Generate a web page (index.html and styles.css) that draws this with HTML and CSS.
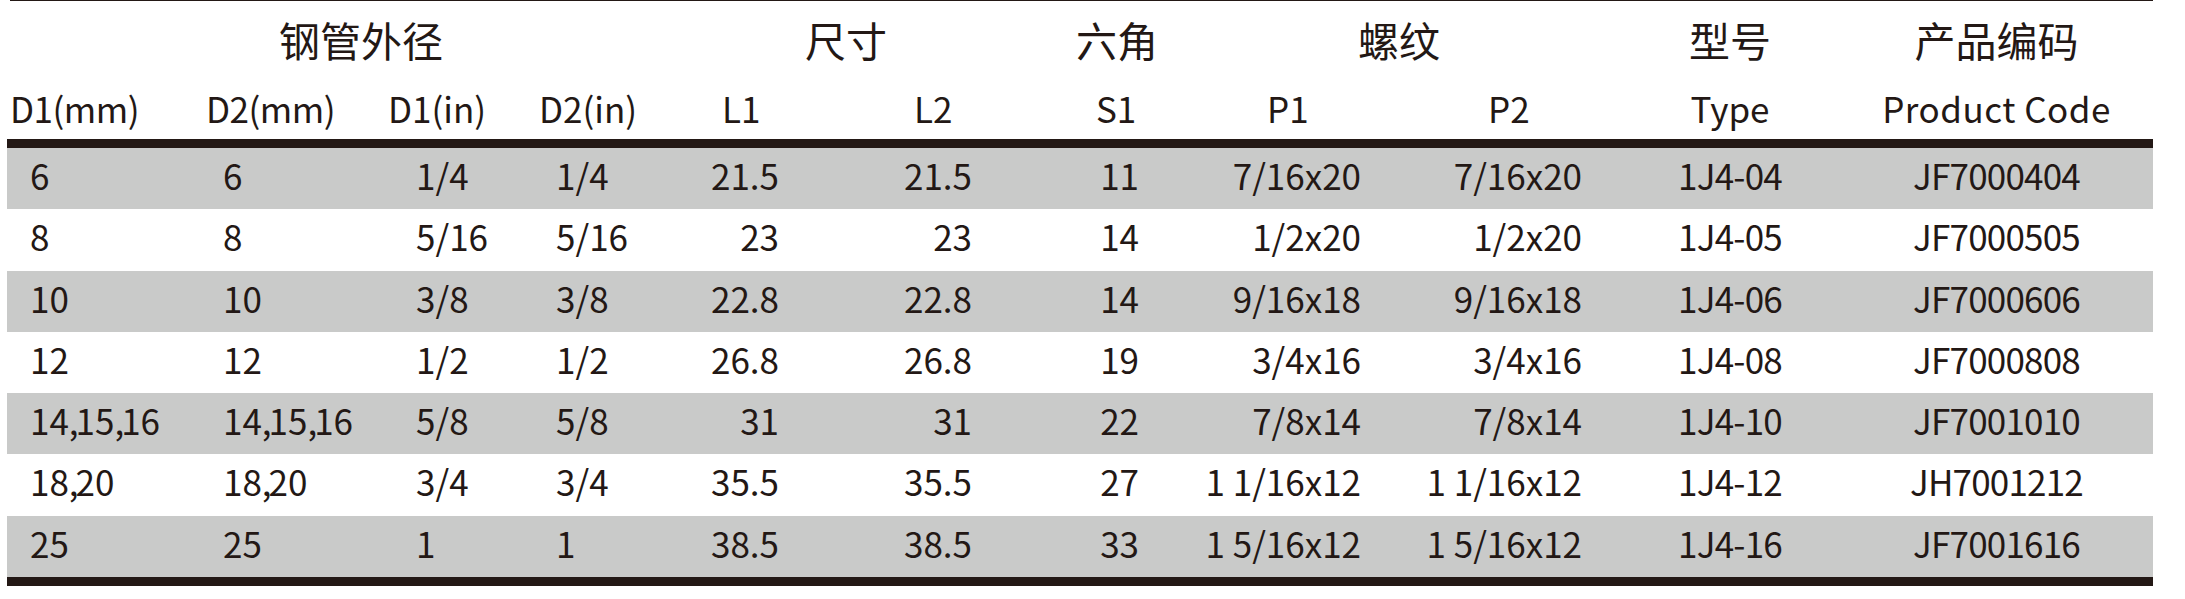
FILE: index.html
```html
<!DOCTYPE html>
<html lang="zh">
<head>
<meta charset="utf-8">
<title>规格表</title>
<link rel="stylesheet" href="styles.css">
</head>
<body>
<div class="sheet">
  <div class="rule-top"></div>
  <div class="head1">
    <div class="g-pipe">钢管外径</div>
    <div class="g-size">尺寸</div>
    <div class="g-hex">六角</div>
    <div class="g-thread">螺纹</div>
    <div class="g-type">型号</div>
    <div class="g-code">产品编码</div>
  </div>
  <div class="grid head2">
    <div class="h c1">D1(mm)</div>
    <div class="h c2">D2(mm)</div>
    <div class="h c3">D1(in)</div>
    <div class="h c4">D2(in)</div>
    <div class="h c5">L1</div>
    <div class="h c6">L2</div>
    <div class="h c7">S1</div>
    <div class="h c8">P1</div>
    <div class="h c9">P2</div>
    <div class="h c10">Type</div>
    <div class="h c11">Product Code</div>
  </div>
  <div class="body">
    <div class="grid row shade"><div class="d c1">6</div><div class="d c2">6</div><div class="d c3">1/4</div><div class="d c4">1/4</div><div class="d c5">21.5</div><div class="d c6">21.5</div><div class="d c7">11</div><div class="d c8">7/16x20</div><div class="d c9">7/16x20</div><div class="d c10">1J4-04</div><div class="d c11">JF7000404</div></div>
    <div class="grid row"><div class="d c1">8</div><div class="d c2">8</div><div class="d c3">5/16</div><div class="d c4">5/16</div><div class="d c5">23</div><div class="d c6">23</div><div class="d c7">14</div><div class="d c8">1/2x20</div><div class="d c9">1/2x20</div><div class="d c10">1J4-05</div><div class="d c11">JF7000505</div></div>
    <div class="grid row shade"><div class="d c1">10</div><div class="d c2">10</div><div class="d c3">3/8</div><div class="d c4">3/8</div><div class="d c5">22.8</div><div class="d c6">22.8</div><div class="d c7">14</div><div class="d c8">9/16x18</div><div class="d c9">9/16x18</div><div class="d c10">1J4-06</div><div class="d c11">JF7000606</div></div>
    <div class="grid row"><div class="d c1">12</div><div class="d c2">12</div><div class="d c3">1/2</div><div class="d c4">1/2</div><div class="d c5">26.8</div><div class="d c6">26.8</div><div class="d c7">19</div><div class="d c8">3/4x16</div><div class="d c9">3/4x16</div><div class="d c10">1J4-08</div><div class="d c11">JF7000808</div></div>
    <div class="grid row shade"><div class="d c1">14<span class="cm">,</span>15<span class="cm">,</span>16</div><div class="d c2">14<span class="cm">,</span>15<span class="cm">,</span>16</div><div class="d c3">5/8</div><div class="d c4">5/8</div><div class="d c5">31</div><div class="d c6">31</div><div class="d c7">22</div><div class="d c8">7/8x14</div><div class="d c9">7/8x14</div><div class="d c10">1J4-10</div><div class="d c11">JF7001010</div></div>
    <div class="grid row"><div class="d c1">18<span class="cm">,</span>20</div><div class="d c2">18<span class="cm">,</span>20</div><div class="d c3">3/4</div><div class="d c4">3/4</div><div class="d c5">35.5</div><div class="d c6">35.5</div><div class="d c7">27</div><div class="d c8">1 1/16x12</div><div class="d c9">1 1/16x12</div><div class="d c10">1J4-12</div><div class="d c11">JH7001212</div></div>
    <div class="grid row shade"><div class="d c1">25</div><div class="d c2">25</div><div class="d c3">1</div><div class="d c4">1</div><div class="d c5">38.5</div><div class="d c6">38.5</div><div class="d c7">33</div><div class="d c8">1 5/16x12</div><div class="d c9">1 5/16x12</div><div class="d c10">1J4-16</div><div class="d c11">JF7001616</div></div>
  </div>
</div>
</body>
</html>
```

FILE: styles.css
```css
html, body {
  margin: 0;
  padding: 0;
  background: #ffffff;
}

body {
  font-family: "Noto Sans CJK SC", "Noto Sans", sans-serif;
  color: #231815;
  font-weight: 400;
}

.sheet {
  margin-left: 7px;
  width: 2146px;
}

.rule-top {
  height: 1px;
  margin-left: 3px;
  background: #231815;
}

.grid {
  display: grid;
  grid-template-columns: 193px 180px 150px 130px 140px 200px 180px 220px 220px 220px 313px;
}

/* group header */
.head1 {
  display: grid;
  grid-template-columns: 193px 180px 150px 130px 140px 200px 180px 220px 220px 220px 313px;
  height: 76px;
  line-height: 76px;
  font-size: 41px;
  white-space: nowrap;
}

.g-pipe { grid-column: 1 / 5; padding-left: 272px; }
.g-size { grid-column: 5 / 7; padding-left: 145px; }
.g-hex { grid-column: 7 / 8; padding-left: 76px; }
.g-thread { grid-column: 8 / 10; padding-left: 178px; }
.g-type { grid-column: 10 / 11; text-align: center; }
.g-code { grid-column: 11 / 12; text-align: center; }

/* column header */
.head2 {
  height: 62px;
  line-height: 62px;
  font-size: 35px;
  border-bottom: 9px solid #231815;
  white-space: nowrap;
}

.h.c1 { padding-left: 3px; letter-spacing: -0.5px; }
.h.c2 { padding-left: 6px; letter-spacing: -0.5px; }
.h.c3 { padding-left: 8px; }
.h.c4 { padding-left: 9px; }
.h.c5 { padding-left: 62px; }
.h.c6 { padding-left: 114px; }
.h.c7 { padding-left: 96px; }
.h.c8 { padding-left: 87px; }
.h.c9 { padding-left: 88px; }
.h.c10 { text-align: center; }
.h.c11 { text-align: center; letter-spacing: 0.5px; }

/* body */
.body {
  border-bottom: 9px solid #231815;
}

.row {
  height: 61.28px;
  font-size: 35px;
  line-height: 54px;
  white-space: nowrap;
}

.shade {
  background: #c9cac9;
}

.cm {
  letter-spacing: -3px;
}

.d.c1 { padding-left: 23px; }
.d.c2 { padding-left: 23px; }
.d.c3 { padding-left: 36px; }
.d.c4 { padding-left: 26px; }
.d.c5 { text-align: right; padding-right: 21px; }
.d.c6 { text-align: right; padding-right: 28px; }
.d.c7 { text-align: right; padding-right: 41px; }
.d.c8 { text-align: right; padding-right: 39px; }
.d.c9 { text-align: right; padding-right: 38px; }
.d.c10 { text-align: center; letter-spacing: -0.8px; }
.d.c11 { text-align: center; letter-spacing: -0.8px; }
```
